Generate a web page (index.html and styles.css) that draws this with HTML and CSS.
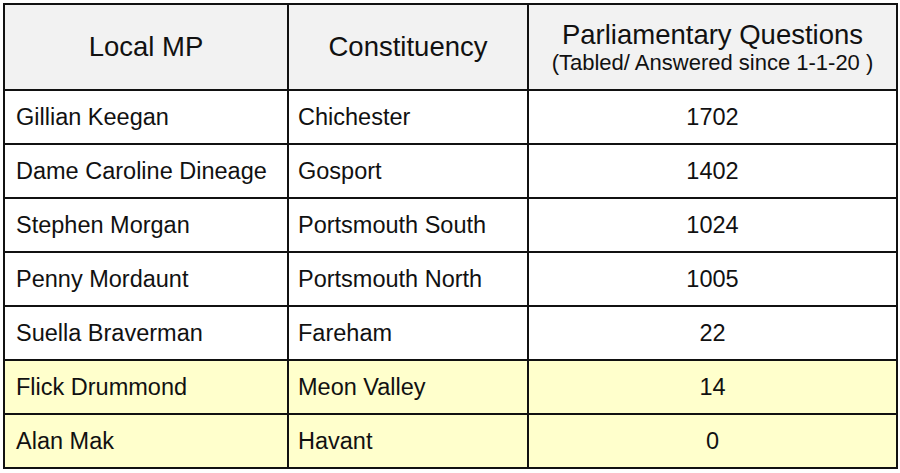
FILE: index.html
```html
<!DOCTYPE html>
<html lang="en">
<head>
<meta charset="utf-8">
<title>Local MPs - Parliamentary Questions</title>
<link rel="stylesheet" href="styles.css">
</head>
<body>
<div class="table" role="table">
  <div class="cell head" role="columnheader">Local MP</div>
  <div class="cell head" role="columnheader">Constituency</div>
  <div class="cell head stack" role="columnheader">
    <span class="title">Parliamentary Questions</span>
    <span class="sub">(Tabled/ Answered since 1-1-20 )</span>
  </div>

  <div class="cell">Gillian Keegan</div>
  <div class="cell">Chichester</div>
  <div class="cell num">1702</div>

  <div class="cell">Dame Caroline Dineage</div>
  <div class="cell">Gosport</div>
  <div class="cell num">1402</div>

  <div class="cell">Stephen Morgan</div>
  <div class="cell">Portsmouth South</div>
  <div class="cell num">1024</div>

  <div class="cell">Penny Mordaunt</div>
  <div class="cell">Portsmouth North</div>
  <div class="cell num">1005</div>

  <div class="cell">Suella Braverman</div>
  <div class="cell">Fareham</div>
  <div class="cell num">22</div>

  <div class="cell hl">Flick Drummond</div>
  <div class="cell hl">Meon Valley</div>
  <div class="cell num hl">14</div>

  <div class="cell hl">Alan Mak</div>
  <div class="cell hl">Havant</div>
  <div class="cell num hl">0</div>
</div>
</body>
</html>
```
FILE: styles.css
```css
html, body {
  margin: 0;
  padding: 0;
  background: #ffffff;
}

body {
  padding: 3px;
  font-family: "Liberation Sans", Arial, sans-serif;
  color: #111111;
}

.table {
  display: grid;
  grid-template-columns: 284px 240px 369px;
  grid-template-rows: 86px repeat(7, 54px);
  width: max-content;
  border-left: 2px solid #111111;
  border-top: 2px solid #111111;
  background: #ffffff;
}

.cell {
  box-sizing: border-box;
  border-right: 2px solid #111111;
  border-bottom: 2px solid #111111;
  display: flex;
  align-items: center;
  padding-left: 11px;
  font-size: 23.5px;
  white-space: nowrap;
}

.cell:nth-child(3n+2) {
  padding-left: 9px;
}

.head {
  background: #f2f2f2;
  justify-content: center;
  padding-left: 0;
  font-size: 27.5px;
}

.cell.head:nth-child(3n+2) {
  padding-left: 0;
}

.stack {
  flex-direction: column;
  padding-top: 2px;
}

.stack .title {
  font-size: 27.5px;
  line-height: 30px;
}

.stack .sub {
  font-size: 22px;
  line-height: 26px;
}

.num {
  justify-content: center;
  padding-left: 0;
}

.hl {
  background: #ffffcc;
}
```
